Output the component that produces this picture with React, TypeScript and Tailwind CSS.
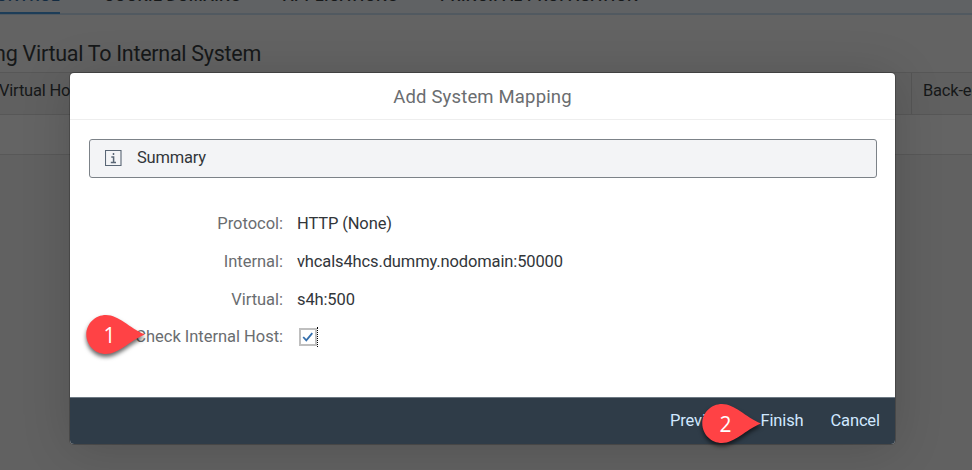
import React from "react";

function Marker({ label, className }: { label: string; className: string }) {
  return (
    <div className={`absolute h-[52px] w-[72px] ${className}`}>
      <svg className="absolute inset-0 overflow-visible drop-shadow-[0_3px_2px_rgba(0,0,0,0.6)]" width="72" height="52" viewBox="0 0 72 52">
        <path d="M22 2C11.2 2 2.3 10.7 2.3 21.5S11.2 41 22 41C35 41 45 28 61 21.5C45 15 35 2 22 2Z" fill="#ff4245" />
      </svg>
      <span className="absolute left-[2px] top-[10px] w-[47px] text-center text-[21px] leading-6 text-white [font-family:'Open_Sans',sans-serif]">{label}</span>
    </div>
  );
}

function Row({ label, children }: { label: string; children: React.ReactNode }) {
  return (
    <div className="flex h-[37.7px] items-center">
      <div className="w-[213px] shrink-0 whitespace-nowrap text-right tracking-[-0.03px] text-[#6a6d70]">{label}</div>
      <div className="ml-[14px] whitespace-nowrap tracking-[-0.13px] text-[#32363a]">{children}</div>
    </div>
  );
}

export default function App() {
  return (
    <div className="relative h-[470px] w-[972px] overflow-hidden bg-[#636363] text-[16.5px] leading-5 tracking-[-0.2px] [font-family:Roboto,sans-serif]">
      <div className="flex h-[470px] flex-col text-[#161819]">
        <nav className="flex h-[15px] shrink-0 items-end border-b-2 border-[#515960] bg-[#606264] text-[16px] font-medium tracking-[0.35px]">
          <div className="-mb-[2px] flex h-[14px] w-[60px] shrink-0 justify-end self-start border-b-2 border-[#1d3d58]">
            <span className="-mt-[14px] text-[#142c42]">CONTROL</span>
          </div>
          <span className="mb-[7px] ml-[44px] w-[138px] shrink-0 whitespace-nowrap">COOKIE DOMAINS</span>
          <span className="mb-[7px] ml-[41px] w-[114px] shrink-0 whitespace-nowrap">APPLICATIONS</span>
          <span className="mb-[7px] ml-[43px] whitespace-nowrap">PRINCIPAL PROPAGATION</span>
        </nav>
        <div className="flex h-[57px] w-[261px] shrink-0 justify-end whitespace-nowrap pt-[26px] text-[21.5px] leading-[26px] tracking-[-0.28px]">
          Mapping Virtual To Internal System
        </div>
        <div className="flex h-[43px] shrink-0 items-center border-y border-[#575757] bg-[#606060]">
          <span className="-ml-px -mt-[5px] w-[912px] shrink-0">Virtual Host</span>
          <span className="flex h-full w-[61px] shrink-0 items-center overflow-hidden whitespace-nowrap border-l border-[#555555] pb-[5px] pl-[11px]">Back-end</span>
        </div>
        <div className="h-[40px] shrink-0 border-b border-[#585858] bg-[#646464]" />
        <div className="grow bg-[#616161]" />
      </div>

      <section className="absolute left-[70px] top-[73px] flex h-[371px] w-[825px] flex-col overflow-hidden rounded-[4px] bg-white shadow-[0_0_0_1px_rgba(0,0,0,0.2),0_4px_50px_rgba(0,0,0,0.16)]">
        <header className="flex h-[47px] shrink-0 items-center justify-center border-b border-[#eeeeee] pt-px text-[18.5px] tracking-[0.17px] text-[#6a6d70]">
          Add System Mapping
        </header>
        <div className="flex grow flex-col px-[19px] pt-[19px]">
          <div className="flex h-[39px] w-[788px] shrink-0 items-center rounded-[3px] border border-[#7c8288] bg-[#f3f4f6] text-[#32363a]">
            <svg className="ml-[15px]" width="17" height="17" viewBox="0 0 17 17" fill="none" stroke="#596675">
              <path d="M0.5 0.5H16V15.5H0.5Z" strokeWidth="1.1" />
              <path d="M8.5 3V5M6.3 7H8.6V12.3M5.8 12.6H11" strokeWidth="1.5" />
            </svg>
            <span className="mb-[2px] ml-[15px]">Summary</span>
          </div>
          <div className="-ml-[19px] mt-[27.5px] flex flex-col">
            <Row label="Protocol:">HTTP (None)</Row>
            <Row label="Internal:">vhcals4hcs.dummy.nodomain:50000</Row>
            <Row label="Virtual:">s4h:500</Row>
            <Row label="Check Internal Host:">
              <div className="ml-[2px] flex items-center">
                <div className="flex h-[18px] w-[18px] items-center justify-center border-2 border-[#bfbfbf]">
                  <svg width="12" height="12" viewBox="0 0 12 12" fill="none" stroke="#346fad" strokeWidth="1.8">
                    <path d="M1.2 6L4.3 9.3L10.3 2.2" />
                  </svg>
                </div>
                <div className="h-[20px] border-l border-dotted border-black" />
              </div>
            </Row>
          </div>
        </div>
        <footer className="flex h-[47px] shrink-0 items-center border-t border-[#6d7983] bg-[#2f3c48] pl-[600px] tracking-[-0.15px] text-[#d1e8ff]">
          <span className="w-[90.5px]">Previous</span>
          <span className="w-[70px]">Finish</span>
          <span>Cancel</span>
        </footer>
      </section>
      <Marker label="1" className="left-[84px] top-[313px]" />
      <Marker label="2" className="left-[700px] top-[402px]" />
    </div>
  );
}
